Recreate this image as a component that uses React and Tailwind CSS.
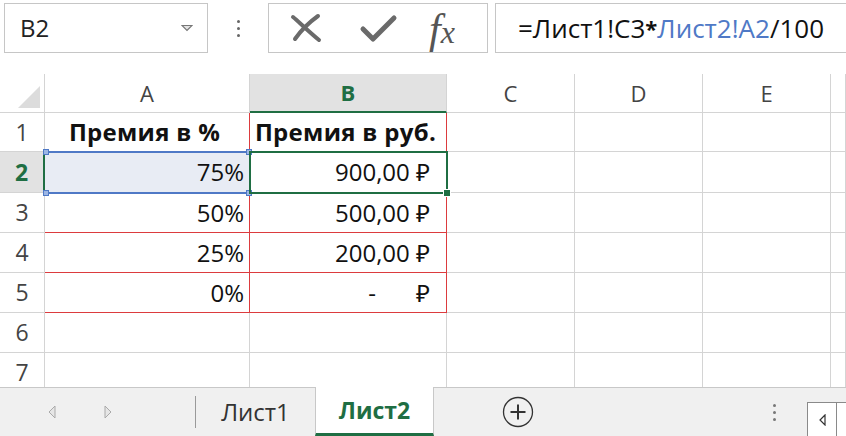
import React from 'react';

const cols = ['A', 'B', 'C', 'D', 'E', ''];

// cell border overrides: red borders around the table
const cellClass = (r, c) => {
  const base = 'border-r border-b border-[#d4d4d4]';
  if (c === 0 && r === 1) return base + ' border-r-[#dc3b3e]';
  if (c === 1 && r === 1) return base + ' border-r-[#dc3b3e]';
  if (c === 1 && r === 2) return base + ' border-r-[#dc3b3e]';
  if ((c === 0 || c === 1) && r >= 3 && r <= 5) return base + ' border-r-[#dc3b3e] border-b-[#dc3b3e]';
  return base;
};

const data = {
  '1-0': { text: 'Премия в %', bold: true, align: 'center' },
  '1-1': { text: 'Премия в руб.', bold: true, align: 'center' },
  '2-0': { text: '75%', align: 'right' },
  '2-1': { text: '900,00 ₽', align: 'right', rub: true },
  '3-0': { text: '50%', align: 'right' },
  '3-1': { text: '500,00 ₽', align: 'right', rub: true },
  '4-0': { text: '25%', align: 'right' },
  '4-1': { text: '200,00 ₽', align: 'right', rub: true },
  '5-0': { text: '0%', align: 'right' },
  '5-1': { dash: true },
};

const rowHeights = ['h-[39px]', 'h-[41px]', 'h-[40px]', 'h-[40px]', 'h-[40px]', 'h-[40px]', 'h-[40px]'];

function Cell({ r, c }) {
  const d = data[`${r}-${c}`];
  const bg = r === 2 && c === 0 ? 'bg-[#e8ecf4]' : '';
  let content = null;
  if (d && d.dash) {
    content = (
      <div className="flex h-full items-center justify-end pr-[16px]">
        <span className="mr-[40px]">-</span>
        <span>₽</span>
      </div>
    );
  } else if (d) {
    content = (
      <div
        className={`flex h-full items-center whitespace-nowrap ${d.align === 'center' ? 'justify-center' : 'justify-end'} ${d.rub ? 'pr-[16px]' : 'pr-[5px]'} ${d.bold ? 'font-bold tracking-[0.3px]' : ''}`}
      >
        {d.text}
      </div>
    );
  }
  return <div className={`${cellClass(r, c)} ${bg} ${rowHeights[r - 1]} text-[24px] text-[#111]`}>{content}</div>;
}

function Toolbar() {
  return (
    <div className="flex h-[74px] items-start pt-[3px]">
      <div className="ml-[4px] flex h-[50px] w-[204px] items-center justify-between border border-[#c6c6c6] bg-white pl-[15px] pr-[14px]">
        <span className="text-[24px] text-[#222]">B2</span>
        <svg width="12" height="8" viewBox="0 0 12 8">
          <path d="M1 1.5 L11 1.5 L6 6.5 Z" fill="#e4e4e4" stroke="#777" strokeWidth="1.2" />
        </svg>
      </div>
      <div className="flex w-[60px] flex-col items-center justify-center gap-[4px] self-stretch pb-[20px]">
        <span className="h-[3px] w-[3px] rounded-full bg-[#666]" />
        <span className="h-[3px] w-[3px] rounded-full bg-[#666]" />
        <span className="h-[3px] w-[3px] rounded-full bg-[#666]" />
      </div>
      <div className="flex h-[50px] w-[220px] items-center border border-[#c6c6c6] bg-white">
        <svg className="ml-[20px]" width="34" height="32" viewBox="0 0 34 32">
          <path d="M4 5 C 9 9, 18 18, 30 28" stroke="#6a6a6a" strokeWidth="4" fill="none" strokeLinecap="round" />
          <path d="M29 4 C 22 9, 13 17, 6 27" stroke="#6a6a6a" strokeWidth="4" fill="none" strokeLinecap="round" />
        </svg>
        <svg className="ml-[36px]" width="40" height="32" viewBox="0 0 40 32">
          <path d="M4 17 L14 27 L35 6" stroke="#6a6a6a" strokeWidth="5" fill="none" strokeLinecap="round" strokeLinejoin="round" />
        </svg>
        <span
          className="ml-[30px] mt-[2px] flex items-baseline italic text-[#555]"
          style={{ fontFamily: '"Liberation Serif", "DejaVu Serif", serif' }}
        >
          <span className="text-[42px] leading-none">f</span>
          <span className="text-[32px] leading-none">x</span>
        </span>
      </div>
      <div className="ml-[7px] flex h-[50px] flex-1 items-center whitespace-nowrap border border-r-0 border-[#c6c6c6] bg-white pl-[22px] text-[26px] text-[#111]">
        <span>=Лист1!C3</span>
        <span className="text-[22px] font-bold">*</span>
        <span className="text-[#4f79c6]">Лист2!A2</span>
        <span>/100</span>
      </div>
    </div>
  );
}

function Grid() {
  return (
    <div className="relative h-[313px] overflow-hidden">
      <div className="grid grid-cols-[45px_205px_197px_128px_128px_128px_1fr]">
        {/* header row */}
        <div className="relative h-[39px] border-r border-b border-[#d4d4d4] bg-white">
          <svg className="absolute bottom-[4px] right-[4px]" width="22" height="22" viewBox="0 0 22 22">
            <path d="M22 0 L22 22 L0 22 Z" fill="#dcdcdc" />
          </svg>
        </div>
        {cols.map((c) =>
          c === 'B' ? (
            <div
              key="B"
              className="flex h-[39px] items-center justify-center border-r border-b-2 border-r-[#d4d4d4] border-b-[#1f6e43] bg-[#e2e2e2] text-[22px] font-bold text-[#1f6e43]"
            >
              B
            </div>
          ) : (
            <div
              key={c || 'F'}
              className="flex h-[39px] items-center justify-center border-r border-b border-[#d4d4d4] bg-white text-[22px] text-[#444]"
            >
              {c}
            </div>
          )
        )}
        {[1, 2, 3, 4, 5, 6, 7].map((r) => (
          <React.Fragment key={r}>
            {r === 2 ? (
              <div className="flex h-[41px] items-center justify-center border-r-2 border-b border-r-[#1f6e43] border-b-[#d4d4d4] bg-[#e2e2e2] text-[23px] font-bold text-[#1f6e43]">
                2
              </div>
            ) : (
              <div
                className={`flex ${rowHeights[r - 1]} items-center justify-center border-r border-b border-[#d4d4d4] bg-white text-[23px] text-[#444]`}
              >
                {r}
              </div>
            )}
            {[0, 1, 2, 3, 4, 5].map((c) => (
              <Cell key={c} r={r} c={c} />
            ))}
          </React.Fragment>
        ))}
      </div>

      {/* blue reference highlight around A2 */}
      <div className="pointer-events-none absolute left-[45px] top-[77px] h-[43px] w-[205px] border-y-2 border-[#4f79c6]" />
      {[
        'left-[43px] top-[75px]',
        'left-[246px] top-[75px]',
        'left-[43px] top-[116px]',
        'left-[246px] top-[116px]',
      ].map((p) => (
        <div key={p} className={`absolute ${p} h-[6px] w-[6px] border border-[#4f79c6] bg-[#9db6e4]`} />
      ))}

      {/* active cell B2 */}
      <div className="pointer-events-none absolute left-[249px] top-[77px] h-[43px] w-[199px] border-2 border-[#1f6e43]" />
      <div className="absolute left-[443px] top-[115px] h-[8px] w-[8px] border border-white bg-[#1f6e43]" />
    </div>
  );
}

function Tabs() {
  return (
    <div className="flex h-[49px] items-stretch border-t border-[#c8c8c8] bg-[#f0f0f0] text-[24px]">
      <div className="flex w-[195px] items-center">
        <svg className="ml-[48px]" width="8" height="14" viewBox="0 0 8 14">
          <path d="M7 1 L1 7 L7 13 Z" fill="#e6e6e6" stroke="#aaa" strokeWidth="1" />
        </svg>
        <svg className="ml-[48px]" width="8" height="14" viewBox="0 0 8 14">
          <path d="M1 1 L7 7 L1 13 Z" fill="#e6e6e6" stroke="#aaa" strokeWidth="1" />
        </svg>
      </div>
      <div className="my-[8px] w-px bg-[#9a9a9a]" />
      <div className="flex w-[119px] items-center justify-center text-[#333]">Лист1</div>
      <div className="-mt-px flex w-[119px] items-center justify-center border-x border-b-[3px] border-x-[#c8c8c8] border-b-[#1f6e43] bg-white text-[23px] font-bold text-[#1f6e43]">
        Лист2
      </div>
      <div className="flex w-[168px] items-center justify-center">
        <svg width="32" height="32" viewBox="0 0 32 32">
          <circle cx="16" cy="16" r="14.5" fill="none" stroke="#333" strokeWidth="1.3" />
          <path d="M16 8.5 V23.5 M8.5 16 H23.5" stroke="#333" strokeWidth="2" />
        </svg>
      </div>
      <div className="flex-1" />
      <div className="flex w-[20px] flex-col items-center justify-center gap-[4px]">
        <span className="h-[3px] w-[3px] rounded-full bg-[#777]" />
        <span className="h-[3px] w-[3px] rounded-full bg-[#777]" />
        <span className="h-[3px] w-[3px] rounded-full bg-[#777]" />
      </div>
      <div className="ml-[23px] mt-[14px] flex w-[39px] border border-r-0 border-b-0 border-[#8a8a8a] bg-white">
        <div className="flex w-[29px] items-center justify-center border-r border-[#8a8a8a]">
          <svg width="7" height="12" viewBox="0 0 7 12">
            <path d="M6 1 L1 6 L6 11 Z" fill="#fff" stroke="#333" strokeWidth="1.2" />
          </svg>
        </div>
      </div>
    </div>
  );
}

export default function App() {
  return (
    <div
      className="h-[436px] w-[846px] overflow-hidden bg-white"
      style={{ fontFamily: '"Open Sans", "Noto Sans", sans-serif' }}
    >
      <Toolbar />
      <Grid />
      <Tabs />
    </div>
  );
}
